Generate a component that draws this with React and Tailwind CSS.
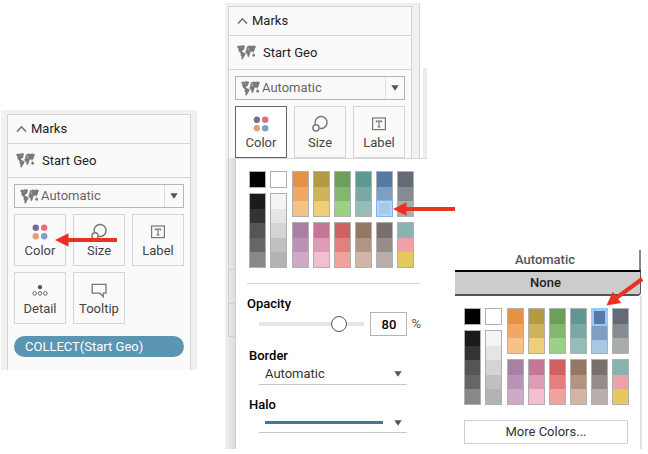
const ramps = [
  [
    ["bg-[#e69243]", "bg-[#efa866]", "bg-[#f7c288]"],
    ["bg-[#a980a2]", "bg-[#b993b5]", "bg-[#cfa9c8]"],
  ],
  [
    ["bg-[#b39b44]", "bg-[#ceb35c]", "bg-[#edcf77]"],
    ["bg-[#c77796]", "bg-[#dd9cb4]", "bg-[#f3bed0]"],
  ],
  [
    ["bg-[#6b9f5b]", "bg-[#84b670]", "bg-[#9bd087]"],
    ["bg-[#d06162]", "bg-[#e37f7f]", "bg-[#f2a29c]"],
  ],
  [
    ["bg-[#5e9892]", "bg-[#7aa9a4]", "bg-[#95bcb7]"],
    ["bg-[#967862]", "bg-[#b19482]", "bg-[#d1b5a7]"],
  ],
  [
    ["bg-[#5879a5]", "bg-[#7e9ec2]", "bg-[#a6c9e4]"],
    ["bg-[#79706e]", "bg-[#978c8a]", "bg-[#b8afac]"],
  ],
  [
    ["bg-[#636b76]", "bg-[#858b90]", "bg-[#a8acac]"],
    ["bg-[#87b4b1]", "bg-[#efa0a8]", "bg-[#e6c95d]"],
  ],
];

const darks = ["bg-[#1b1b1b]", "bg-[#333333]", "bg-[#555555]", "bg-[#666666]", "bg-[#888888]"];
const lights = ["bg-[#f5f5f5]", "bg-[#e5e5e5]", "bg-[#d4d4d4]", "bg-[#c0c0c0]", "bg-[#b3b3b3]"];

const selectedStyles = {
  0: "-m-px border-[3px] border-[#9cc6f3]",
  2: "-m-px border border-[#7fb3f2] outline outline-2 -outline-offset-3 outline-[#b3d4f5]",
};

function Stack({ colors, height, name, selected = -1 }) {
  return (
    <div className={`flex w-[17px] flex-col border border-[#b0b0b0] ${height}`}>
      {colors.map((c, i) => (
        <button
          key={c}
          type="button"
          aria-label={`${name} ${i + 1}`}
          className={`min-h-0 flex-1 ${c} ${i === selected ? selectedStyles[i] : ""}`}
        />
      ))}
    </div>
  );
}

function Palette({ selected }) {
  return (
    <div className="flex gap-1">
      <div className="flex flex-col gap-[5px]">
        <Stack colors={["bg-black"]} height="h-[17px]" name="Black" />
        <Stack colors={darks} height="h-[75px]" name="Dark gray" />
      </div>
      <div className="mr-px flex flex-col gap-[5px]">
        <Stack colors={["bg-white"]} height="h-[17px]" name="White" />
        <Stack colors={lights} height="h-[75px]" name="Light gray" />
      </div>
      {ramps.map(([top, bottom], i) => (
        <div key={top[0]} className="flex flex-col gap-[5px]">
          <Stack colors={top} height="h-[46px]" name={`Ramp ${i + 1}`} selected={i === 4 ? selected : -1} />
          <Stack colors={bottom} height="h-[46px]" name={`Ramp ${i + 7}`} />
        </div>
      ))}
    </div>
  );
}

function MapIcon() {
  return (
    <svg width="19" height="15" viewBox="0 0 19 15" fill="#7a7a7a" aria-hidden="true" className="shrink-0">
      <path d="M.3 1.4 1.4.6 3 .9 4.6.3l3 .3.6 1.5L7 2.8l.6 1L6.4 4.9 5.2 5.8 4.9 6.8l1.2.4 2 1 .5 1.4-1 1.5-1 1.3-.7 1.9-1.1.2-.4-1.1.1-1.9-1-1.6.3-1.7L2.4 6.9 1.4 5.4 1.3 3.2.3 2.6Z" />
      <path d="m9.6 2.6 1-1.4 1.6-.6 2.2.3L16 .4l2.5.7.3 1.4-1 .8.2 1.3-.9 1.3-.6 1.2-.9-.2-.4-.9-.6 1-.7-.7-.5 1.3-.5 1.7-.6 1.7-1 1.2-.8-.9-.2-2.2-1.5-.9-.4-1.7.8-1.3L9.4 4Z" />
      <path d="m15.2 9.6 1.3-.9 1.3.6.3 1.5-1 .9-1.7-.4ZM15.2 7.5l1.7.2-.6.7Z" />
      <path d="m10.8 3.2.7-.8.5.5-.5.8ZM3.6 2.2l1 .5-.5.6ZM10.6 4.6l2 .2-.2.4-1.7-.1Z" fill="#e4e4e4" />
    </svg>
  );
}

function Caret() {
  return (
    <svg width="8" height="6" viewBox="0 0 8 6" aria-hidden="true" className="pointer-events-none shrink-0">
      <path d="M.3.3h7.4L4 5.8Z" fill="#555" />
    </svg>
  );
}

function ColorIcon() {
  return (
    <svg width="18" height="18" viewBox="0 0 18 18" aria-hidden="true">
      <circle cx="4.8" cy="4.8" r="3.2" fill="#7b6a90" />
      <circle cx="13.2" cy="4.8" r="3.2" fill="#e5707b" />
      <circle cx="4.8" cy="13.2" r="3.2" fill="#e39f78" />
      <circle cx="13.2" cy="13.2" r="3.2" fill="#829fc5" />
    </svg>
  );
}

function SizeIcon() {
  return (
    <svg width="18" height="18" viewBox="0 0 18 18" fill="none" stroke="#777" strokeWidth="1.4" aria-hidden="true">
      <path d="M4.4 9.4A6 6 0 1 1 8.6 13.3" />
      <circle cx="5" cy="12.9" r="3.1" />
    </svg>
  );
}

function LabelIcon() {
  return (
    <svg width="18" height="18" viewBox="0 0 18 18" fill="none" stroke="#777" aria-hidden="true">
      <rect x="2.6" y="3" width="12.8" height="11.6" strokeWidth="1.2" />
      <path d="M6.4 7.6V6.2h5.2v1.4M9 6.2v5.4M7.6 11.8h2.8" strokeWidth="1.2" />
    </svg>
  );
}

function DetailIcon() {
  return (
    <svg width="18" height="18" viewBox="0 0 18 18" fill="none" stroke="#666" aria-hidden="true">
      <circle cx="9" cy="6.2" r="2.1" fill="#555" stroke="none" />
      <circle cx="3.6" cy="12.4" r="1.8" />
      <circle cx="9" cy="12.4" r="1.8" />
      <circle cx="14.4" cy="12.4" r="1.8" />
    </svg>
  );
}

function TooltipIcon() {
  return (
    <svg width="18" height="18" viewBox="0 0 18 18" fill="none" stroke="#777" strokeWidth="1.3" aria-hidden="true">
      <path d="M2.2 3.4h13.8v8.8h-2.7v3.4L9.8 12.2H2.2Z" />
    </svg>
  );
}

function MarkButton({ icon, label, active = false }) {
  return (
    <button
      type="button"
      className={`flex h-[52px] flex-col items-center border pt-2 ${
        active ? "border-[#666] bg-white" : "border-[#d6d6d6] bg-[#fafafa]"
      }`}
    >
      {icon}
      <span className="mt-0.5 leading-4 text-[#444]">{label}</span>
    </button>
  );
}

function MarksCard({ colorActive = false, children }) {
  return (
    <div className="flex-1 border border-b-0 border-[#d4d4d4] bg-[#fafafa]">
      <button type="button" className="flex h-[29px] w-full items-center gap-1 border-b border-[#d4d4d4] pl-2 text-[#222]">
        <svg width="11" height="8" viewBox="0 0 11 8" fill="none" aria-hidden="true">
          <path d="m1 6.6 4.5-4.8L10 6.6" stroke="#777" strokeWidth="1.6" />
        </svg>
        Marks
      </button>
      <div className="flex h-[34px] items-center gap-[7px] border-b border-[#d4d4d4] pl-2 text-[#222]">
        <MapIcon />
        Start Geo
      </div>
      <div className="flex flex-col gap-1.5 px-1.5 pt-1.5">
        <div className="flex h-6 items-center border border-[#b5b5b5] bg-[#fafafa] pl-[5px]">
          <MapIcon />
          <select aria-label="Mark type" className="h-full min-w-0 flex-1 appearance-none pl-0.5 text-[#666]">
            <option>Automatic</option>
          </select>
          <span className="flex h-full w-[19px] items-center justify-center border-l border-[#dcdcdc]">
            <Caret />
          </span>
        </div>
        <div className="grid grid-cols-3 gap-x-[7px] gap-y-1.5">
          <MarkButton icon={<ColorIcon />} label="Color" active={colorActive} />
          <MarkButton icon={<SizeIcon />} label="Size" />
          <MarkButton icon={<LabelIcon />} label="Label" />
          {children}
        </div>
      </div>
    </div>
  );
}

function Arrow({ className }) {
  return (
    <svg width="62" height="14" viewBox="0 0 62 14" aria-hidden="true" className={`absolute ${className}`}>
      <path d="M0 7 13.5.3V4.9H62V9.1H13.5v4.6Z" fill="#ea3223" />
    </svg>
  );
}

function MarksPanel() {
  return (
    <section className="relative mt-[107px] flex self-start bg-[#f1f1f1] px-1.5 pt-1">
      <MarksCard>
        <MarkButton icon={<DetailIcon />} label="Detail" />
        <MarkButton icon={<TooltipIcon />} label="Tooltip" />
        <button
          type="button"
          className="col-span-3 mt-1.5 mb-[13px] h-[21px] rounded-full bg-[#5b95b1] pl-[11px] text-left leading-5 text-white"
        >
          COLLECT(Start Geo)
        </button>
      </MarksCard>
      <Arrow className="top-[123px] left-[54px]" />
    </section>
  );
}

function ColorMenuPanel() {
  return (
    <section className="relative">
      <div className="flex">
        <div className="flex flex-1 border-r border-[#d4d4d4] bg-[#f1f1f1] pt-[3px] pr-[7px] pl-[3px]">
          <MarksCard colorActive />
        </div>
        <div className="mt-[65px] ml-[3px] w-1 bg-[#ececec]" />
      </div>
      <div className="flex">
        <div className="w-[11px] shrink-0 border-r border-[#cfcfcf] bg-gradient-to-r from-[#f1f1f1] to-[#dcdcdc] pl-[3px]">
          <div className="h-[111px] border-l border-[#cfcfcf]" />
          <div className="h-[34px] border-t border-l border-[#cfcfcf]" />
          <div className="h-[34px] border-y border-l border-[#cfcfcf]" />
        </div>
        <div className="min-w-0 flex-1 border-t border-[#d8d8d8] bg-white pt-3 pb-4 pl-[13px]">
          <Palette selected={2} />
          <hr className="mt-[15px] mr-[7px] -ml-0.5 border-[#d4d4d4]" />
          <label htmlFor="opacity" className="mt-3 -ml-0.5 block leading-4 font-medium text-black">
            Opacity
          </label>
          <div className="flex h-6 items-center pl-2.5">
            <input
              id="opacity"
              type="range"
              min="0"
              max="100"
              defaultValue="80"
              className="h-1 min-w-0 flex-1 appearance-none bg-[#e5e5e5] [&::-webkit-slider-thumb]:size-4 [&::-webkit-slider-thumb]:appearance-none [&::-webkit-slider-thumb]:rounded-full [&::-webkit-slider-thumb]:border [&::-webkit-slider-thumb]:border-[#555] [&::-webkit-slider-thumb]:bg-white"
            />
            <input
              aria-label="Opacity percent"
              defaultValue="80"
              className="ml-1.5 h-6 w-[37px] border border-[#b5b5b5] text-center font-medium text-black"
            />
            <span className="mr-1.5 ml-1 text-[#555]">%</span>
          </div>
          <label htmlFor="border" className="mt-3 block leading-4 font-medium text-black">
            Border
          </label>
          <div className="mr-5 ml-2.5 flex h-[21px] items-center border-b border-[#c8c8c8] pr-[5px]">
            <select id="border" className="min-w-0 flex-1 appearance-none pl-1.5 text-[#333]">
              <option>Automatic</option>
            </select>
            <Caret />
          </div>
          <div id="halo" className="mt-3 leading-4 font-medium text-black">Halo</div>
          <div className="mr-5 ml-2.5 flex">
            <button
              type="button"
              aria-labelledby="halo"
              className="flex h-5 flex-1 items-center gap-[11px] border-b border-[#c8c8c8] pr-[5px] pl-1.5"
            >
              <span className="h-[3px] flex-1 bg-[#4a72a8]" />
              <Caret />
            </button>
          </div>
        </div>
      </div>
      <Arrow className="top-[199px] left-[168px]" />
    </section>
  );
}

function HaloPanel() {
  return (
    <section className="relative flex flex-col self-end">
      <button type="button" className="mr-0.5 h-5 border-r-2 border-[#888] pr-1 text-center leading-4 font-medium text-[#555]">
        Automatic
      </button>
      <button
        type="button"
        className="mr-0.5 h-[26px] rounded-br-sm border-t-2 border-r border-b-2 border-t-black border-r-[#555] border-b-[#555] bg-[#cccccc] pr-1 text-center font-medium text-[#222]"
      >
        None
      </button>
      <div className="mr-px flex flex-col border-r-2 border-[#e2e2e2] pt-3 pr-3 pb-[5px] pl-[9px]">
        <Palette selected={0} />
        <button type="button" className="mt-[15px] h-6 border border-[#d0d0d0] bg-white text-[#333]">
          More Colors...
        </button>
      </div>
      <svg width="38" height="32" viewBox="0 0 38 32" aria-hidden="true" className="absolute top-[25px] left-[151px]">
        <path d="M.5 30.5 6.8 16.7 9.8 20.7 35 2.2 37.4 5.8 12.3 24.1 15.2 28Z" fill="#ea3223" />
      </svg>
    </section>
  );
}

export default function App() {
  return (
    <main className="grid grid-cols-[minmax(0,196fr)_minmax(0,202fr)_minmax(0,188fr)] gap-7 bg-white pt-[3px] pr-[5px] pl-px font-[Roboto,'Liberation_Sans',sans-serif] text-[13px]">
      <MarksPanel />
      <ColorMenuPanel />
      <HaloPanel />
    </main>
  );
}
